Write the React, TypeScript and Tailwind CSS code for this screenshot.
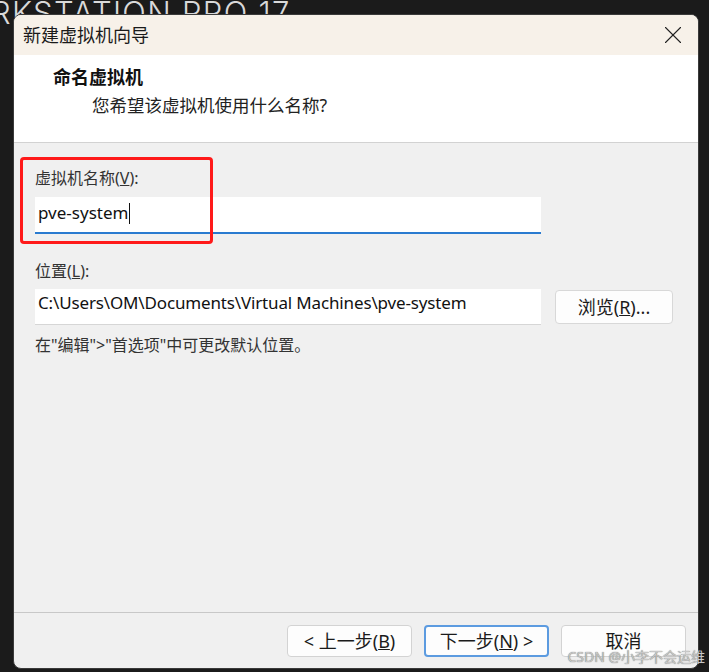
import { X } from "lucide-react";

const cjk = "font-['Segoe_UI','Noto_Sans','Noto_Sans_CJK_SC',sans-serif]";

const Btn = ({ children, primary }: { children: React.ReactNode; primary?: boolean }) => (
  <button
    className={`h-[32px] w-[125px] rounded-[4px] bg-[#fdfdfd] text-[18px] leading-none text-[#1b1b1b] ${
      primary ? "border-2 border-[#5c9be0]" : "border border-[#d3d3d3]"
    }`}
  >
    {children}
  </button>
);

export default function App() {
  return (
    <div className={`relative h-[672px] w-[709px] overflow-hidden bg-[#1b1b1b] pl-[13px] pt-[14px] ${cjk}`}>
      {/* app title behind the dialog */}
      <div className="absolute left-[-9px] top-[-2px] font-['Inter',sans-serif] text-[31px] font-light leading-[30px] tracking-[1.3px] text-[#d9d9d9]">
        RKSTATION PRO 17
      </div>

      <div className="relative flex h-[655px] w-[686px] flex-col overflow-hidden rounded-[8px] border border-[#3a3a3a] bg-[#f0f0f0]">
        {/* title bar */}
        <div className="flex h-[40px] shrink-0 items-center justify-between bg-[#f7f1e9] pl-[9px] pr-[10px]">
          <span className="text-[18px] text-[#1a1a1a]">新建虚拟机向导</span>
          <X size={30} strokeWidth={0.9} className="text-[#222]" />
        </div>

        {/* header */}
        <div className="flex h-[88px] shrink-0 flex-col border-b border-[#d2d2d2] bg-white pl-[39px] pt-[8px]">
          <div className="text-[18px] font-bold leading-[28px] text-[#111]">命名虚拟机</div>
          <div className="pl-[39px] text-[17.5px] leading-[28px] text-[#222]">您希望该虚拟机使用什么名称?</div>
        </div>

        {/* body */}
        <div className="relative flex flex-1 flex-col px-[21px] pt-[24px] text-[#333]">
          <div className="absolute left-[6px] top-[14px] h-[87px] w-[193px] rounded-[4px] border-[3px] border-[#ff1a1a]" />
          <div className="text-[16px] leading-[22px]">
            虚拟机名称(<span className="underline">V</span>):
          </div>
          <div className="mt-[8px] flex h-[37px] w-[506px] items-start border-b-2 border-[#2a7bd0] bg-white pl-[3px] pt-[3px] text-[17px] text-[#111]">
            pve-system<span className="ml-[1px] mt-[3px] h-[21px] w-[1px] bg-[#111]" />
          </div>

          <div className="mt-[26px] text-[16px] leading-[22px]">
            位置(<span className="underline">L</span>):
          </div>
          <div className="mt-[7px] flex items-center gap-[14px]">
            <div className="flex h-[36px] w-[506px] items-start border-b border-[#d6d6d6] bg-white pl-[3px] pt-[1px] text-[17px] tracking-[-0.15px] text-[#111]">
              C:\Users\OM\Documents\Virtual Machines\pve-system
            </div>
            <button className="h-[34px] w-[118px] rounded-[4px] border border-[#d8d8d8] bg-[#fdfdfd] text-[18px] leading-none text-[#1b1b1b]">
              浏览(<span className="underline">R</span>)...
            </button>
          </div>
          <div className="mt-[9px] text-[16px] leading-[22px]">在"编辑"&gt;"首选项"中可更改默认位置。</div>
        </div>

        {/* footer */}
        <div className="flex h-[56px] shrink-0 justify-end gap-[12px] border-t border-[#c8c8c8] pr-[12px] pt-[12px]">
          <Btn>
            &lt; 上一步(<span className="underline">B</span>)
          </Btn>
          <Btn primary>
            下一步(<span className="underline">N</span>) &gt;
          </Btn>
          <Btn>取消</Btn>
        </div>
      </div>

      <div className="absolute bottom-[5px] right-[4px] text-[14px] text-[#c8c8c8] [text-shadow:0_0_1px_#555]">
        CSDN @小李不会运维
      </div>
    </div>
  );
}
